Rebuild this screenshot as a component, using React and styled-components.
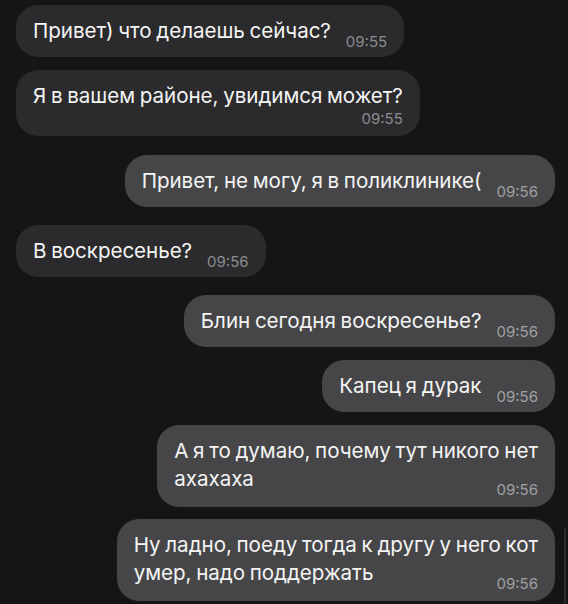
import styled, { createGlobalStyle } from "styled-components";

const GlobalStyle = createGlobalStyle`
  html, body {
    margin: 0;
    padding: 0;
    background: #151515;
  }
  body {
    font-family: Inter, "Noto Sans", "DejaVu Sans", sans-serif;
    -webkit-font-smoothing: antialiased;
  }
`;

const Screen = styled.div`
  position: relative;
  width: 568px;
  height: 604px;
  overflow: hidden;
  background: #151515;
  box-sizing: border-box;
  padding: 5px 13px 0 16px;
  display: flex;
  flex-direction: column;
`;

const Row = styled.div`
  display: flex;
  justify-content: ${(p) => (p.$out ? "flex-end" : "flex-start")};
  margin-top: ${(p) => p.$gap}px;
`;

const Bubble = styled.div`
  display: flex;
  flex-direction: column;
  box-sizing: border-box;
  border-radius: 22px;
  padding: ${(p) => (p.$stacked ? "12px 17px 8px" : "12px 17px")};
  background: ${(p) => (p.$out ? "#464648" : "#2b2b2d")};
  color: #f4f4f4;
  font-size: 20.6px;
  line-height: 28px;
  letter-spacing: -0.05px;
  word-spacing: -1px;
  white-space: nowrap;
`;

const Text = styled.div``;

const Time = styled.span`
  font-size: 15px;
  letter-spacing: 0;
  word-spacing: 0;
  color: ${(p) => (p.$out ? "#a0a0a4" : "#8c8c91")};
  ${(p) =>
    p.$inline
      ? `
    line-height: 0;
    margin-left: 15px;
    vertical-align: -9px;
  `
      : `
    display: block;
    align-self: flex-end;
    line-height: 18px;
    margin-top: ${p.$overlap ? -12 : 0}px;
  `}
`;

const ScrollThumb = styled.div`
  position: absolute;
  right: 2px;
  top: 528px;
  width: 2px;
  height: 80px;
  border-radius: 1px;
  background: #2c2c2e;
`;

const messages = [
  { lines: ["Привет) что делаешь сейчас?"], time: "09:55", mode: "inline", gap: 0 },
  { lines: ["Я в вашем районе, увидимся может?"], time: "09:55", mode: "below", gap: 13 },
  { out: true, lines: ["Привет, не могу, я в поликлинике("], time: "09:56", mode: "inline", gap: 19 },
  { lines: ["В воскресенье?"], time: "09:56", mode: "inline", gap: 18 },
  { out: true, lines: ["Блин сегодня воскресенье?"], time: "09:56", mode: "inline", gap: 18 },
  { out: true, lines: ["Капец я дурак"], time: "09:56", mode: "inline", gap: 13 },
  { out: true, lines: ["А я то думаю, почему тут никого нет", "ахахаха"], time: "09:56", mode: "overlap", gap: 13 },
  { out: true, lines: ["Ну ладно, поеду тогда к другу у него кот", "умер, надо поддержать"], time: "09:56", mode: "overlap", gap: 12 },
];

function Message({ msg }) {
  const inline = msg.mode === "inline";
  return (
    <Row $out={msg.out} $gap={msg.gap}>
      <Bubble $out={msg.out} $stacked={!inline}>
        {inline ? (
          <Text>
            {msg.lines[0]}
            <Time $out={msg.out} $inline>{msg.time}</Time>
          </Text>
        ) : (
          <>
            {msg.lines.map((line, i) => (
              <Text key={i}>{line}</Text>
            ))}
            <Time $out={msg.out} $overlap={msg.mode === "overlap"}>{msg.time}</Time>
          </>
        )}
      </Bubble>
    </Row>
  );
}

export default function App() {
  return (
    <>
      <GlobalStyle />
      <Screen>
        {messages.map((msg, i) => (
          <Message key={i} msg={msg} />
        ))}
        <ScrollThumb />
      </Screen>
    </>
  );
}
